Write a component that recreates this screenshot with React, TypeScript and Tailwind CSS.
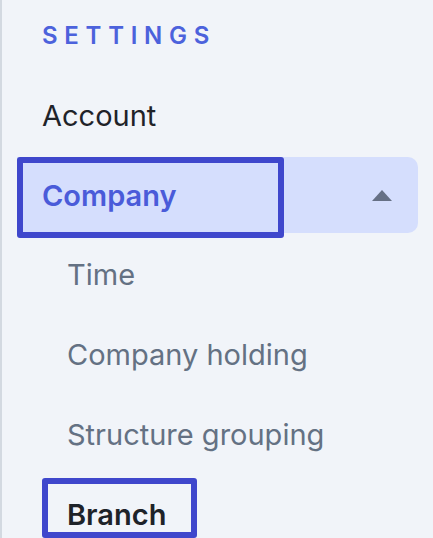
const subItems = ["Time", "Company holding", "Structure grouping"];

function Caret() {
  return (
    <svg width="20" height="11" viewBox="0 0 20 11" className="fill-[#667085]">
      <polygon points="10,0 20,11 0,11" />
    </svg>
  );
}

export default function App() {
  return (
    <div
      className="min-h-screen w-full overflow-hidden border-l-2 border-[#d3d9e1] bg-[#f1f4f9] pt-[16px] pr-[15px] pl-[15px]"
      style={{ fontFamily: "Inter, 'Noto Sans', sans-serif" }}
    >
      <div className="flex h-[40px] items-center pl-[25px] text-[24px] leading-none font-semibold tracking-[0.28em] text-[#4c62dc]">
        SETTINGS
      </div>

      <div className="mt-[19px] flex h-[80px] items-center pl-[25px] text-[29px] leading-none text-[#1f2329]">
        Account
      </div>

      {/* expanded group */}
      <div className="relative mt-[2px] flex h-[76px] items-center justify-between rounded-r-[10px] bg-[#d5defd] pr-[26px] pl-[25px]">
        <span className="text-[29px] leading-none font-semibold text-[#4a5bd9]">Company</span>
        <Caret />
        <div className="pointer-events-none absolute top-0 left-0 h-[81px] w-[267px] rounded-[3px] border-[6px] border-[#3f47cc]" />
      </div>

      <div className="mt-[1px] flex flex-col">
        {subItems.map((item) => (
          <div
            key={item}
            className="flex h-[80px] items-center pl-[50px] text-[29px] leading-none text-[#647183]"
          >
            {item}
          </div>
        ))}
        <div className="flex h-[80px] items-center pl-[50px]">
          <span className="relative text-[29px] leading-none font-semibold text-[#1e2329]">
            Branch
            <span className="pointer-events-none absolute top-[-22px] left-[-25px] h-[60px] w-[155px] rounded-[3px] border-[6px] border-[#3f47cc]" />
          </span>
        </div>
      </div>
    </div>
  );
}
